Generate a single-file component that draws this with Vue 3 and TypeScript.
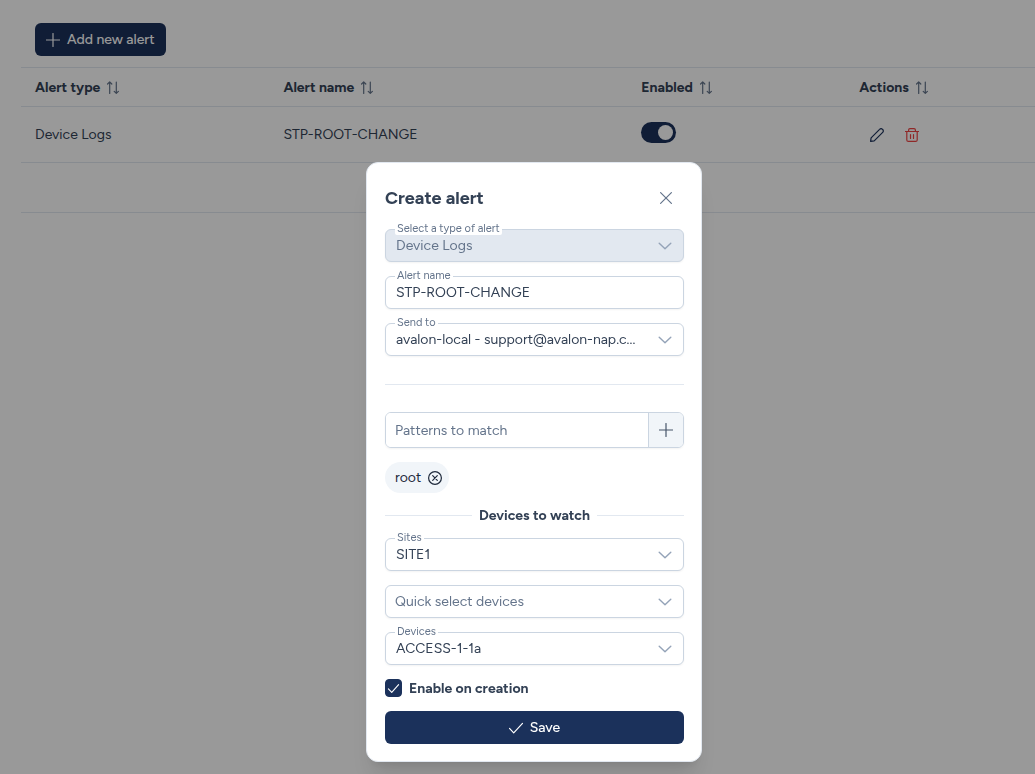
<script setup lang="ts">
import { ref } from 'vue'

interface Alert {
  type: string
  name: string
  enabled: boolean
}

const columns = ['Alert type', 'Alert name', 'Enabled', 'Actions']
const alerts = ref<Alert[]>([{ type: 'Device Logs', name: 'STP-ROOT-CHANGE', enabled: true }])

const alertName = ref('STP-ROOT-CHANGE')
const pattern = ref('')
const patterns = ref<string[]>(['root'])
const enableOnCreation = ref(true)

function addPattern(): void {
  const value = pattern.value.trim()
  if (value) patterns.value.push(value)
  pattern.value = ''
}

function removePattern(index: number): void {
  patterns.value.splice(index, 1)
}
</script>

<template>
  <div class="page">
    <main class="content">
      <div class="toolbar">
        <button type="button" class="btn">
          <svg class="icon" viewBox="0 0 14 14"><path d="M7 .5v13M.5 7h13" /></svg>
          Add new alert
        </button>
      </div>
      <table class="alerts">
        <colgroup>
          <col class="col-type" />
          <col class="col-name" />
          <col class="col-enabled" />
          <col />
        </colgroup>
        <thead>
          <tr>
            <th v-for="column in columns" :key="column" scope="col">
              <span class="heading">
                {{ column }}
                <svg class="sort" viewBox="0 0 14 14">
                  <path d="M3.7 13.4V2M1.6 4l2.1-2.1L5.8 4M10.3 2v11.2M8.2 11.3l2.1 2.1 2.1-2.1" />
                </svg>
              </span>
            </th>
          </tr>
        </thead>
        <tbody>
          <tr v-for="alert in alerts" :key="alert.name" class="row">
            <td>{{ alert.type }}</td>
            <td>{{ alert.name }}</td>
            <td>
              <input v-model="alert.enabled" type="checkbox" role="switch" class="toggle" :aria-label="`Enable ${alert.name}`" />
            </td>
            <td>
              <div class="actions">
                <button type="button" class="action" aria-label="Edit">
                  <svg class="icon" viewBox="0 0 14 14">
                    <path d="M.6 13.4l.5-3.6 8.5-8.5a2 2 0 0 1 2.9 0l.2.2a2 2 0 0 1 0 2.9l-8.5 8.5z" />
                  </svg>
                </button>
                <button type="button" class="action danger" aria-label="Delete">
                  <svg class="icon" viewBox="0 0 14 14">
                    <path d="M.5 3.5h13M3.6 3.5V1.9Q3.6.6 5 .6h4q1.4 0 1.4 1.3v1.6M1.8 3.5v8.4q0 1.5 1.6 1.5h7.2q1.6 0 1.6-1.5V3.5M5.5 6.5v4M8.5 6.5v4" />
                  </svg>
                </button>
              </div>
            </td>
          </tr>
          <tr class="footer"><td colspan="4"></td></tr>
        </tbody>
      </table>
    </main>

    <div class="overlay">
      <form class="dialog" role="dialog" aria-labelledby="dialog-title" @submit.prevent>
        <header class="dialog-header">
          <h2 id="dialog-title">Create alert</h2>
          <button type="button" class="close" aria-label="Close">
            <svg class="icon" viewBox="0 0 14 14"><path d="M1.6 1.6l10.8 10.8M12.4 1.6L1.6 12.4" /></svg>
          </button>
        </header>

        <div class="field">
          <label for="alert-type">Select a type of alert</label>
          <select id="alert-type" class="control" disabled><option>Device Logs</option></select>
          <svg class="chevron" viewBox="0 0 14 14"><path d="M1.2 4.2l5.8 5.6 5.8-5.6" /></svg>
        </div>
        <div class="field">
          <label for="alert-name">Alert name</label>
          <input id="alert-name" v-model="alertName" type="text" class="control" />
        </div>
        <div class="field">
          <label for="send-to">Send to</label>
          <select id="send-to" class="control"><option>avalon-local - support@avalon-nap.c...</option></select>
          <svg class="chevron" viewBox="0 0 14 14"><path d="M1.2 4.2l5.8 5.6 5.8-5.6" /></svg>
        </div>

        <hr class="rule" />

        <div class="group">
          <input v-model="pattern" type="text" placeholder="Patterns to match" aria-label="Patterns to match" />
          <button type="button" aria-label="Add pattern" @click="addPattern">
            <svg class="icon" viewBox="0 0 14 14"><path d="M7 .5v13M.5 7h13" /></svg>
          </button>
        </div>

        <div class="chips">
          <span v-for="(item, index) in patterns" :key="item" class="chip">
            {{ item }}
            <button type="button" :aria-label="`Remove ${item}`" @click="removePattern(index)">
              <svg class="icon" viewBox="0 0 14 14">
                <circle cx="7" cy="7" r="6.4" />
                <path d="M4.7 4.7l4.6 4.6M9.3 4.7L4.7 9.3" />
              </svg>
            </button>
          </span>
        </div>

        <h3 class="divider">Devices to watch</h3>

        <div class="field">
          <label for="sites">Sites</label>
          <select id="sites" class="control"><option>SITE1</option></select>
          <svg class="chevron" viewBox="0 0 14 14"><path d="M1.2 4.2l5.8 5.6 5.8-5.6" /></svg>
        </div>
        <div class="field">
          <select class="control empty" aria-label="Quick select devices"><option>Quick select devices</option></select>
          <svg class="chevron" viewBox="0 0 14 14"><path d="M1.2 4.2l5.8 5.6 5.8-5.6" /></svg>
        </div>
        <div class="field">
          <label for="devices">Devices</label>
          <select id="devices" class="control"><option>ACCESS-1-1a</option></select>
          <svg class="chevron" viewBox="0 0 14 14"><path d="M1.2 4.2l5.8 5.6 5.8-5.6" /></svg>
        </div>

        <label class="check">
          <span class="box">
            <input v-model="enableOnCreation" type="checkbox" />
            <svg v-if="enableOnCreation" class="tick" viewBox="0 0 14 14"><path d="M1.5 7.4l3.6 3.7 7.4-8.2" /></svg>
          </span>
          Enable on creation
        </label>

        <button type="submit" class="btn save">
          <svg class="icon" viewBox="0 0 14 14"><path d="M.5 7.4l4.2 4.4L13.5 2.4" /></svg>
          Save
        </button>
      </form>
    </div>
  </div>
</template>

<style>
body {
  margin: 0;
  background: #fff;
}
</style>

<style scoped>
.page {
  min-height: 100vh;
  color: #334155;
  font-family: Figtree, Lato, "Liberation Sans", sans-serif;
  font-size: 14px;
  line-height: 17px;
}

.page * {
  box-sizing: border-box;
}

button,
input,
select {
  margin: 0;
  font: inherit;
}

button {
  padding: 0;
  border: 0;
  background: none;
  color: inherit;
}

svg {
  fill: none;
  stroke: currentColor;
  stroke-width: 1.2;
  stroke-linecap: round;
  stroke-linejoin: round;
}

.icon {
  width: 14px;
  height: 14px;
  flex: none;
}

.content {
  padding: 23px 0 0 21px;
}

.toolbar {
  padding: 0 14px 11px;
}

.btn {
  display: flex;
  align-items: center;
  justify-content: center;
  gap: 7px;
  height: 33px;
  padding: 0 11px;
  border-radius: 6px;
  background: #1b315b;
  color: #fff;
  font-weight: 500;
}

.alerts {
  width: 100%;
  border-collapse: separate;
  border-spacing: 0;
  table-layout: fixed;
}

.col-type {
  width: 24.5%;
}

.col-name {
  width: 35.3%;
}

.col-enabled {
  width: 21.5%;
}

th,
td {
  padding: 0 14px;
  border-bottom: 1px solid #e2e8f0;
  text-align: left;
}

th {
  height: 40px;
  border-top: 1px solid #e2e8f0;
  font-weight: 700;
}

.heading {
  display: flex;
  align-items: center;
  gap: 6px;
}

.sort {
  width: 14px;
  height: 14px;
  color: #64748b;
}

.row td {
  height: 56px;
}

.footer td {
  height: 50px;
}

.toggle {
  display: block;
  appearance: none;
  width: 35px;
  height: 21px;
  margin-bottom: 4px;
  padding: 3px;
  border-radius: 11px;
  background: #cbd5e1;
}

.toggle::before {
  content: "";
  display: block;
  width: 15px;
  height: 15px;
  border-radius: 50%;
  background: #fff;
}

.toggle:checked {
  background: #1b315b;
}

.toggle:checked::before {
  margin-left: 14px;
}

.actions {
  display: flex;
  color: #1b315b;
}

.action {
  display: flex;
  align-items: center;
  justify-content: center;
  width: 35px;
  height: 35px;
}

.danger {
  color: #ef4444;
}

.overlay {
  position: fixed;
  inset: 0;
  display: flex;
  align-items: flex-start;
  justify-content: center;
  padding: 162px 0 12px 33px;
  overflow: auto;
  background: rgba(0, 0, 0, 0.4);
}

.dialog {
  display: flex;
  flex-direction: column;
  gap: 14px;
  width: 100%;
  max-width: 336px;
  padding: 18px 17px 17px 18px;
  border: 1px solid #e2e8f0;
  border-radius: 12px;
  background: #fff;
  box-shadow: 0 20px 25px -5px rgba(0, 0, 0, 0.1), 0 8px 10px -6px rgba(0, 0, 0, 0.1);
}

.dialog-header {
  display: flex;
  align-items: center;
  justify-content: space-between;
  height: 34px;
}

h2 {
  margin: 0;
  font-size: 18px;
  line-height: 24px;
  font-weight: 700;
}

.close {
  display: flex;
  align-items: center;
  justify-content: center;
  width: 36px;
  height: 34px;
  color: #64748b;
}

.field {
  position: relative;
  display: flex;
}

.field label {
  position: absolute;
  top: -6px;
  left: 10px;
  padding: 0 2px;
  border-radius: 2px;
  background: #fff;
  color: #64748b;
  font-size: 11px;
  line-height: 12px;
}

.control {
  appearance: none;
  width: 100%;
  height: 33px;
  padding: 0 38px 0 10px;
  border: 1px solid #cbd5e1;
  border-radius: 6px;
  background: #fff;
  color: #334155;
  box-shadow: 0 1px 2px rgba(18, 18, 23, 0.05);
}

.control.empty {
  padding-left: 9px;
  color: #64748b;
}

.control:disabled {
  background: #e2e8f0;
  color: #64748b;
  opacity: 1;
}

.chevron {
  position: absolute;
  top: 10px;
  right: 12px;
  width: 14px;
  height: 14px;
  color: #94a3b8;
  stroke-width: 1.4;
  pointer-events: none;
}

.rule {
  width: 100%;
  height: 1px;
  margin: 14px 0 13px;
  border: 0;
  background: #e2e8f0;
}

.group {
  display: flex;
  height: 36px;
  border: 1px solid #cbd5e1;
  border-radius: 6px;
  overflow: hidden;
  box-shadow: 0 1px 2px rgba(18, 18, 23, 0.05);
}

.group input {
  flex: 1;
  min-width: 0;
  padding: 0 9px;
  border: 0;
  color: #334155;
}

.group input::placeholder {
  color: #64748b;
  opacity: 1;
}

.group button {
  display: flex;
  align-items: center;
  justify-content: center;
  width: 35px;
  border-left: 1px solid #cbd5e1;
  background: #f1f5f9;
  color: #475569;
}

.chips {
  display: flex;
  flex-wrap: wrap;
  gap: 7px;
}

.chip {
  display: flex;
  align-items: center;
  gap: 7px;
  height: 31px;
  padding: 0 7px 0 10px;
  border-radius: 16px;
  background: #f1f5f9;
  color: #1e293b;
}

.chip button {
  display: flex;
}

.divider {
  display: flex;
  align-items: center;
  gap: 7px;
  margin: 0;
  font-size: 14px;
  line-height: 17px;
  font-weight: 700;
}

.divider::before,
.divider::after {
  content: "";
  flex: 1;
  height: 1px;
  background: #e2e8f0;
}

.check {
  display: flex;
  align-items: center;
  gap: 7px;
  height: 18px;
  font-weight: 700;
}

.box {
  display: grid;
  width: 17px;
  height: 18px;
}

.box > * {
  grid-area: 1 / 1;
}

.box input {
  appearance: none;
  width: 100%;
  height: 100%;
  border: 1px solid #cbd5e1;
  border-radius: 4px;
}

.box input:checked {
  border-color: #1b315b;
  background: #1b315b;
}

.tick {
  place-self: center;
  width: 13px;
  height: 13px;
  color: #fff;
  pointer-events: none;
}
</style>
